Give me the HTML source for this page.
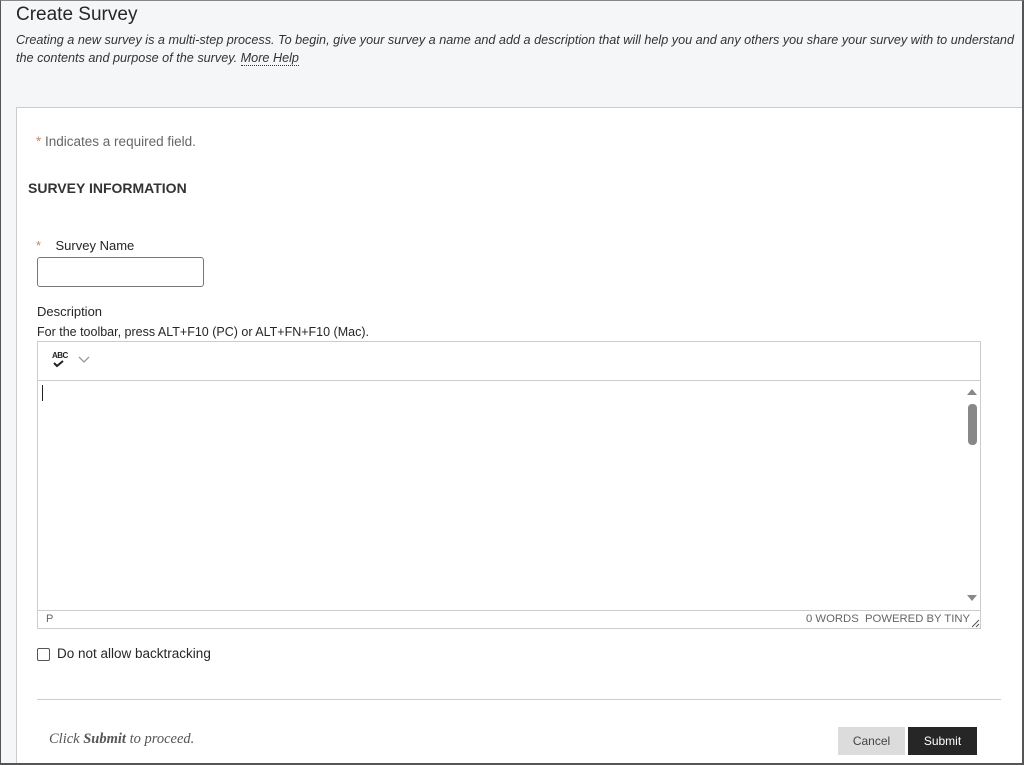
<!DOCTYPE html>
<html><head><meta charset="utf-8"><style>
*{box-sizing:border-box;margin:0;padding:0}
body{width:1024px;height:765px;overflow:hidden;font-family:"Liberation Sans","DejaVu Sans",sans-serif;background:#f5f6f7;color:#262626;position:relative}
.frame{position:absolute;left:0;top:0;width:1024px;height:765px;border:1px solid #555;border-top:1px solid #888;border-right:2px solid #555;border-bottom:2px solid #555}
.abs{position:absolute;white-space:nowrap}
h1{font-weight:normal;font-size:19px;color:#262626}
.it{font-style:italic;font-size:12.65px;color:#333}
.panel{position:absolute;left:16px;top:107px;width:1006px;height:657px;background:#fff;border:1px solid #ccc;border-right:none;border-bottom:none}
.star{color:#c8875a}
.btn{position:absolute;font-size:12px;text-align:center;line-height:28px;height:28px}
</style></head><body>
<div class="abs" style="left:16px;top:4px"><h1>Create Survey</h1></div>
<div class="abs it" style="left:16px;top:33px">Creating a new survey is a multi-step process. To begin, give your survey a name and add a description that will help you and any others you share your survey with to understand</div>
<div class="abs it" style="left:16px;top:51px">the contents and purpose of the survey. <span style="border-bottom:1px dotted #333">More Help</span></div>
<div class="panel"></div>
<div class="abs" style="left:36px;top:134px;font-size:13.5px;color:#666"><span class="star">*</span>&nbsp;Indicates a required field.</div>
<div class="abs" style="left:28px;top:180px;font-size:14px;font-weight:bold;color:#333">SURVEY INFORMATION</div>
<div class="abs" style="left:36px;top:238px;font-size:13px"><span class="star">*</span>&nbsp;&nbsp;&nbsp; Survey Name</div>
<div class="abs" style="left:37px;top:257px;width:167px;height:30px;border:1px solid #777;border-radius:3px;background:#fff"></div>
<div class="abs" style="left:37px;top:304px;font-size:13px">Description</div>
<div class="abs" style="left:37px;top:325px;font-size:12.5px">For the toolbar, press ALT+F10 (PC) or ALT+FN+F10 (Mac).</div>
<div class="abs" style="left:37px;top:341px;width:944px;height:288px;border:1px solid #ccc;background:#fff"></div>
<div class="abs" style="left:37px;top:380px;width:944px;height:1px;background:#ccc"></div>
<div class="abs" style="left:37px;top:610px;width:944px;height:1px;background:#ccc"></div>
<div class="abs" style="left:52px;top:351px;font-size:8px;font-weight:bold;color:#222;letter-spacing:-0.5px">ABC</div>
<svg class="abs" style="left:53px;top:360px" width="12" height="8"><path d="M1 3 L4 6 L10 1" stroke="#222" stroke-width="2" fill="none"/></svg>
<svg class="abs" style="left:78px;top:356px" width="12" height="8"><path d="M1 1 L6 6 L11 1" stroke="#999" stroke-width="1.3" fill="none"/></svg>
<div class="abs" style="left:42px;top:385px;width:1px;height:16px;background:#222"></div>
<svg class="abs" style="left:966px;top:387px" width="12" height="10"><path d="M1 8 L6 2 L11 8Z" fill="#888"/></svg>
<div class="abs" style="left:968px;top:404px;width:9px;height:41px;border-radius:4px;background:#888"></div>
<svg class="abs" style="left:966px;top:593px" width="12" height="10"><path d="M1 2 L6 8 L11 2Z" fill="#888"/></svg>
<div class="abs" style="left:46px;top:613px;font-size:11px;color:#666">P</div>
<div class="abs" style="left:806px;top:613px;font-size:11.3px;color:#666">0 WORDS&nbsp; POWERED BY TINY</div>
<svg class="abs" style="left:970px;top:618px" width="10" height="10"><path d="M2 9 L9 2 M6 9 L9 6" stroke="#555" stroke-width="1"/></svg>
<div class="abs" style="left:37px;top:648px;width:13px;height:13px;border:1px solid #555;border-radius:2px;background:#fff"></div>
<div class="abs" style="left:57px;top:646px;font-size:13.5px">Do not allow backtracking</div>
<div class="abs" style="left:37px;top:699px;width:964px;height:1px;background:#ccc"></div>
<div class="abs" style="left:49px;top:731px;font-family:'Liberation Serif',serif;font-style:italic;font-size:14.5px;color:#555">Click <b>Submit</b> to proceed.</div>
<div class="btn" style="left:838px;top:727px;width:67px;background:#dcdcdc;color:#444">Cancel</div>
<div class="btn" style="left:908px;top:727px;width:69px;background:#262626;color:#fff">Submit</div>
<div class="frame"></div>
</body></html>
